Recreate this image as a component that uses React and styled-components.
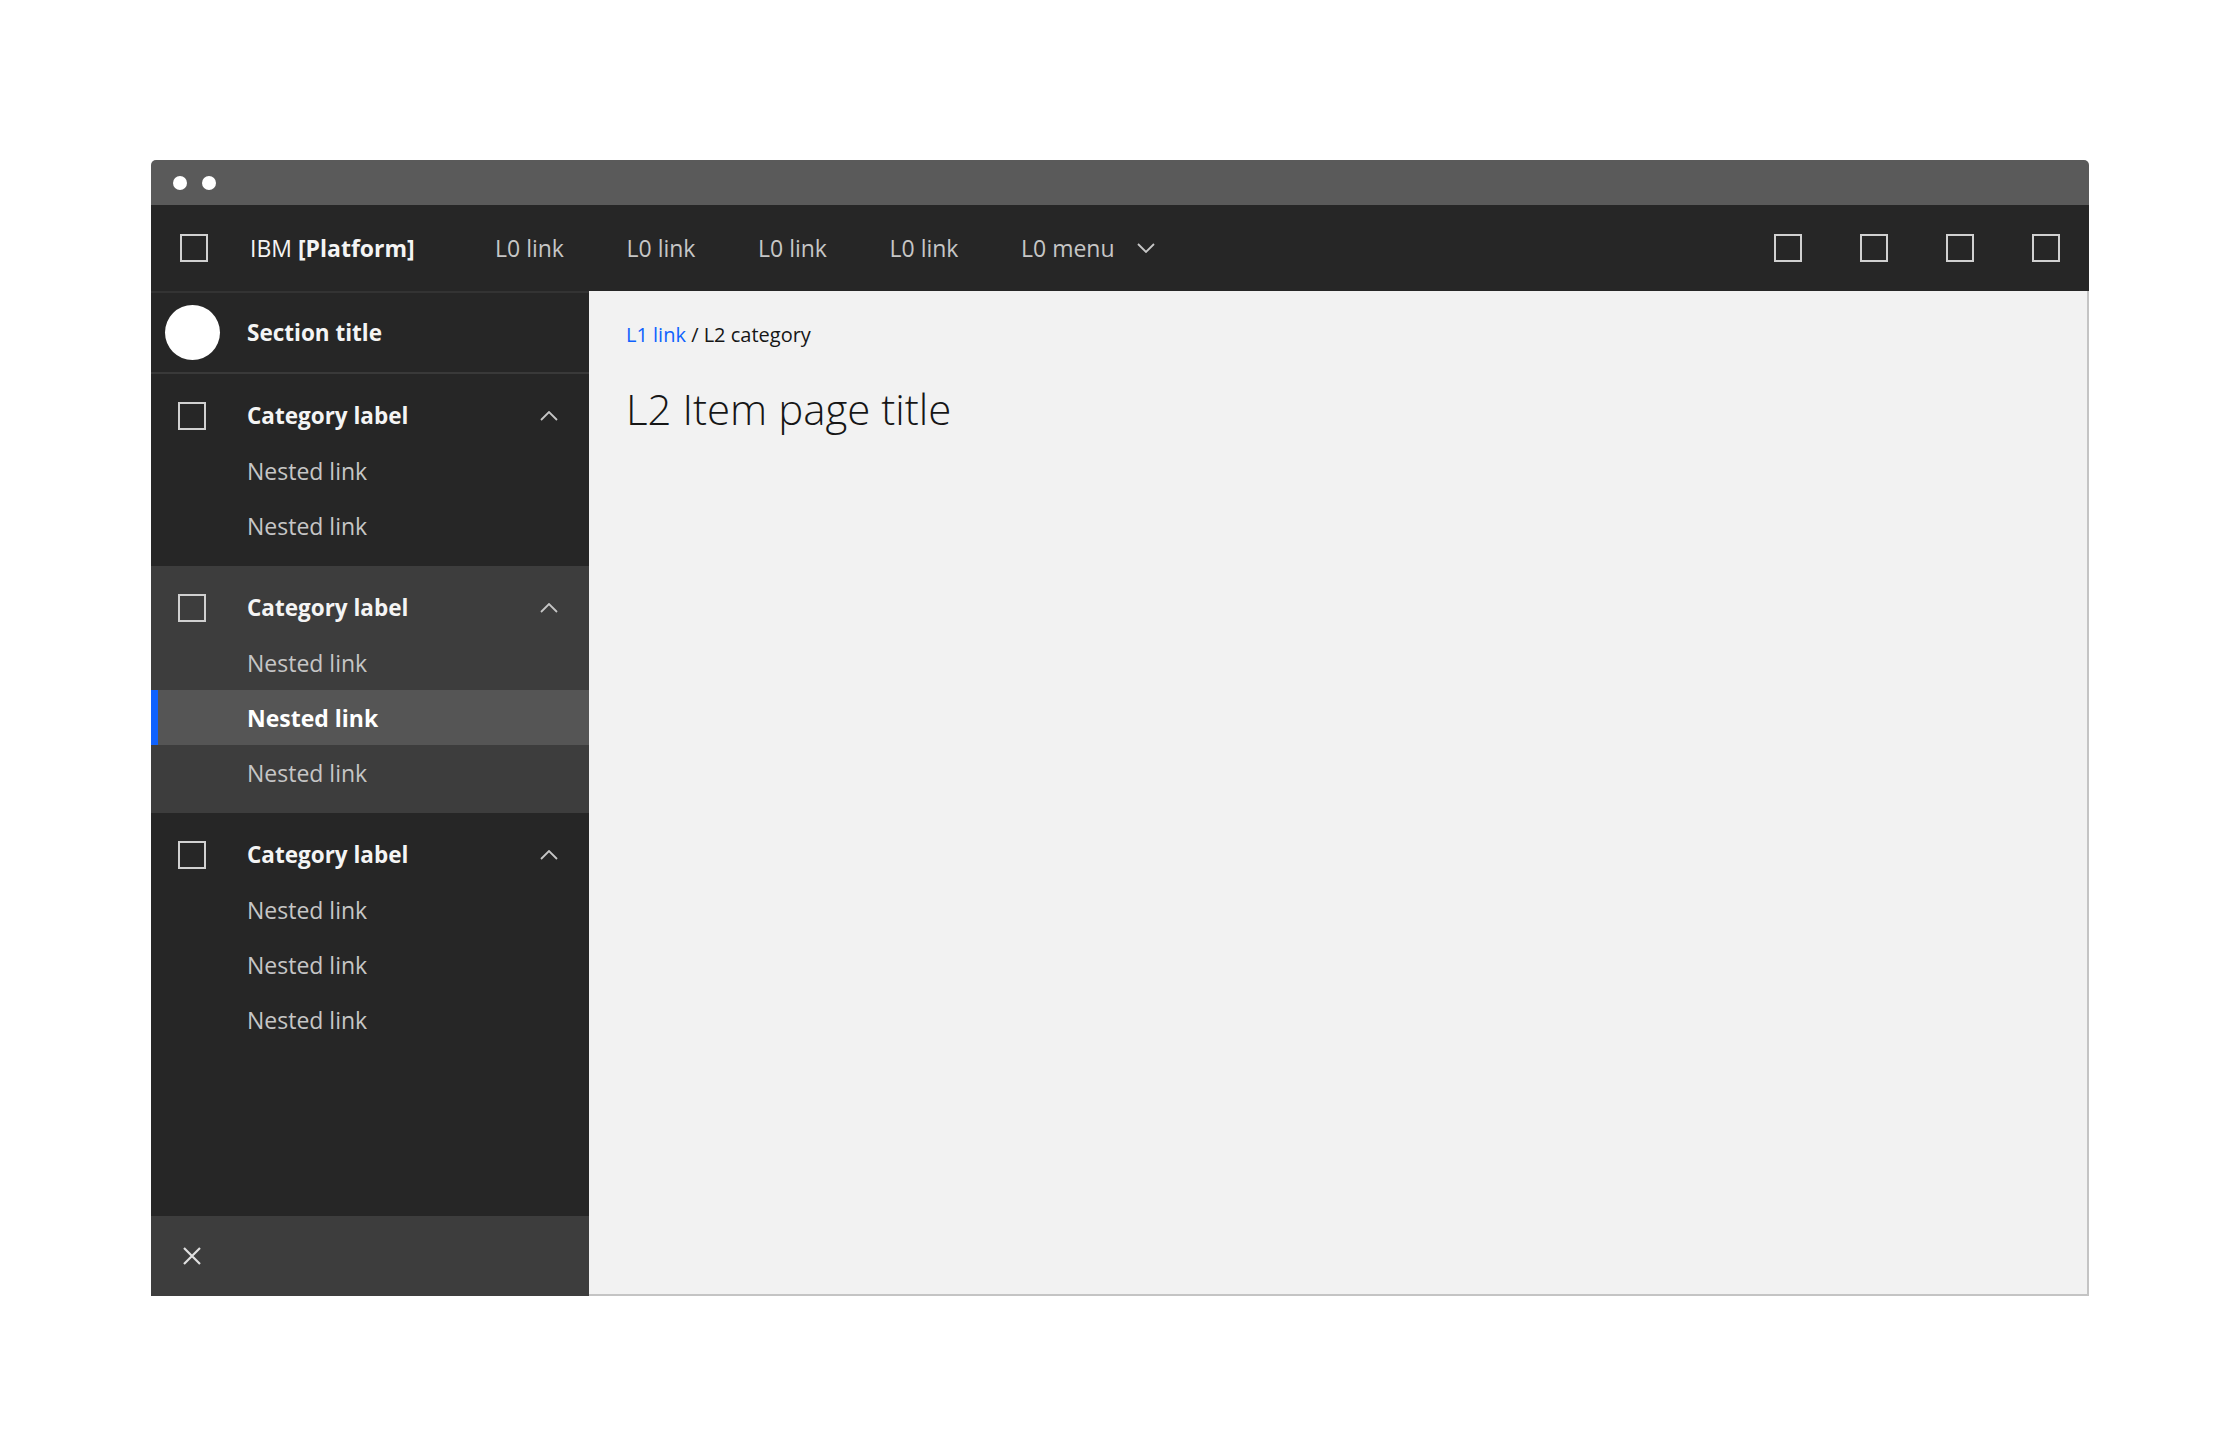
import React from "react";
import styled, { createGlobalStyle } from "styled-components";

const GlobalStyle = createGlobalStyle`
  html, body {
    margin: 0;
    padding: 0;
    background: #ffffff;
    font-family: "Open Sans", "Noto Sans", sans-serif;
  }
`;

const Page = styled.div`
  padding: 160px 151px;
`;

const Window = styled.div`
  width: 1938px;
  border-radius: 5px 5px 0 0;
  overflow: hidden;
`;

const TitleBar = styled.div`
  height: 45px;
  background: #5a5a5a;
  display: flex;
  align-items: center;
  gap: 15px;
  padding-left: 22px;
`;

const Dot = styled.span`
  width: 14px;
  height: 14px;
  border-radius: 50%;
  background: #ffffff;
`;

const Header = styled.header`
  height: 86px;
  background: #262626;
  display: flex;
  align-items: center;
`;

const IconCell = styled.div`
  width: 86px;
  height: 86px;
  display: flex;
  align-items: center;
  justify-content: center;
  flex-shrink: 0;
`;

const Brand = styled.div`
  color: #f4f4f4;
  font-size: 23px;
  width: 245px;
  padding-left: 13px;
  flex-shrink: 0;
  white-space: nowrap;

  b {
    font-weight: 700;
  }
`;

const Nav = styled.nav`
  display: flex;
  align-items: center;
  flex: 1;
`;

const NavLink = styled.a`
  color: #c6c6c6;
  font-size: 23px;
  min-width: 131.5px;
  white-space: nowrap;
  display: flex;
  align-items: center;
  gap: 22px;

  svg {
    flex-shrink: 0;
  }
`;

const Actions = styled.div`
  display: flex;
`;

const Body = styled.div`
  display: flex;
  height: 1005px;
`;

const Sidebar = styled.aside`
  width: 438px;
  flex-shrink: 0;
  background: #262626;
  border-top: 2px solid #333333;
  display: flex;
  flex-direction: column;
`;

const SectionRow = styled.div`
  height: 79px;
  display: flex;
  align-items: center;
  border-bottom: 2px solid #393939;
`;

const LeadIcon = styled.div`
  width: 82px;
  display: flex;
  justify-content: center;
  align-items: center;
  flex-shrink: 0;
`;

const Circle = styled.span`
  width: 55px;
  height: 55px;
  border-radius: 50%;
  background: #ffffff;
`;

const SectionTitle = styled.div`
  color: #f4f4f4;
  font-size: 22.5px;
  font-weight: 700;
  margin-left: 14px;
`;

const Group = styled.div`
  padding: 14px 0 13px;
  background: ${(p) => (p.$open ? "#3d3d3d" : "#262626")};
`;

const Row = styled.div`
  position: relative;
  height: 55px;
  display: flex;
  align-items: center;
  background: ${(p) => (p.$active ? "#555555" : "transparent")};

  ${(p) =>
    p.$active &&
    `
    &::before {
      content: "";
      position: absolute;
      left: 0;
      top: 0;
      bottom: 0;
      width: 7px;
      background: #0f62fe;
    }
  `}
`;

const CategoryLabel = styled.div`
  flex: 1;
  color: #f4f4f4;
  font-size: 22.5px;
  font-weight: 700;
  margin-left: 14px;
`;

const Chevron = styled.div`
  width: 80px;
  display: flex;
  justify-content: center;
`;

const NestedLink = styled.a`
  color: ${(p) => (p.$active ? "#ffffff" : "#c6c6c6")};
  font-size: 23px;
  font-weight: ${(p) => (p.$active ? 700 : 400)};
  margin-left: 96px;
`;

const Spacer = styled.div`
  flex: 1;
`;

const Footer = styled.div`
  height: 80px;
  background: #3d3d3d;
  display: flex;
  align-items: center;
`;

const Content = styled.main`
  flex: 1;
  background: #f2f2f2;
  border-right: 2px solid #c4c4c4;
  border-bottom: 2px solid #c4c4c4;
  padding: 30px 37px;
`;

const Breadcrumb = styled.div`
  font-size: 20px;
  color: #161616;

  a {
    color: #0f62fe;
  }
`;

const PageTitle = styled.h1`
  margin: 32px 0 0;
  font-size: 42px;
  font-weight: 300;
  color: #161616;
`;

const Square = ({ size = 28, color = "#d0d0d0" }) => (
  <svg width={size} height={size} viewBox="0 0 28 28">
    <rect x="1" y="1" width="26" height="26" fill="none" stroke={color} strokeWidth="2" />
  </svg>
);

const ChevronIcon = ({ up }) => (
  <svg width="18" height="10" viewBox="0 0 18 10">
    <polyline
      points={up ? "1,9 9,1 17,9" : "1,1 9,9 17,1"}
      fill="none"
      stroke="#c6c6c6"
      strokeWidth="1.8"
    />
  </svg>
);

const CloseIcon = () => (
  <svg width="18" height="18" viewBox="0 0 18 18">
    <path d="M1 1 L17 17 M17 1 L1 17" stroke="#e0e0e0" strokeWidth="2.2" />
  </svg>
);

const groups = [
  { open: false, links: ["Nested link", "Nested link"] },
  { open: true, links: ["Nested link", "Nested link", "Nested link"], active: 1 },
  { open: false, links: ["Nested link", "Nested link", "Nested link"] },
];

export default function App() {
  return (
    <Page>
      <GlobalStyle />
      <Window>
        <TitleBar>
          <Dot />
          <Dot />
        </TitleBar>
        <Header>
          <IconCell>
            <Square />
          </IconCell>
          <Brand>
            IBM <b>[Platform]</b>
          </Brand>
          <Nav>
            <NavLink>L0 link</NavLink>
            <NavLink>L0 link</NavLink>
            <NavLink>L0 link</NavLink>
            <NavLink>L0 link</NavLink>
            <NavLink>
              L0 menu <ChevronIcon />
            </NavLink>
          </Nav>
          <Actions>
            {[0, 1, 2, 3].map((i) => (
              <IconCell key={i}>
                <Square />
              </IconCell>
            ))}
          </Actions>
        </Header>
        <Body>
          <Sidebar>
            <SectionRow>
              <LeadIcon>
                <Circle />
              </LeadIcon>
              <SectionTitle>Section title</SectionTitle>
            </SectionRow>
            {groups.map((g, gi) => (
              <Group key={gi} $open={g.open}>
                <Row>
                  <LeadIcon>
                    <Square />
                  </LeadIcon>
                  <CategoryLabel>Category label</CategoryLabel>
                  <Chevron>
                    <ChevronIcon up />
                  </Chevron>
                </Row>
                {g.links.map((l, li) => (
                  <Row key={li} $active={g.active === li}>
                    <NestedLink $active={g.active === li}>{l}</NestedLink>
                  </Row>
                ))}
              </Group>
            ))}
            <Spacer />
            <Footer>
              <LeadIcon>
                <CloseIcon />
              </LeadIcon>
            </Footer>
          </Sidebar>
          <Content>
            <Breadcrumb>
              <a>L1 link</a> / L2 category
            </Breadcrumb>
            <PageTitle>L2 Item page title</PageTitle>
          </Content>
        </Body>
      </Window>
    </Page>
  );
}
